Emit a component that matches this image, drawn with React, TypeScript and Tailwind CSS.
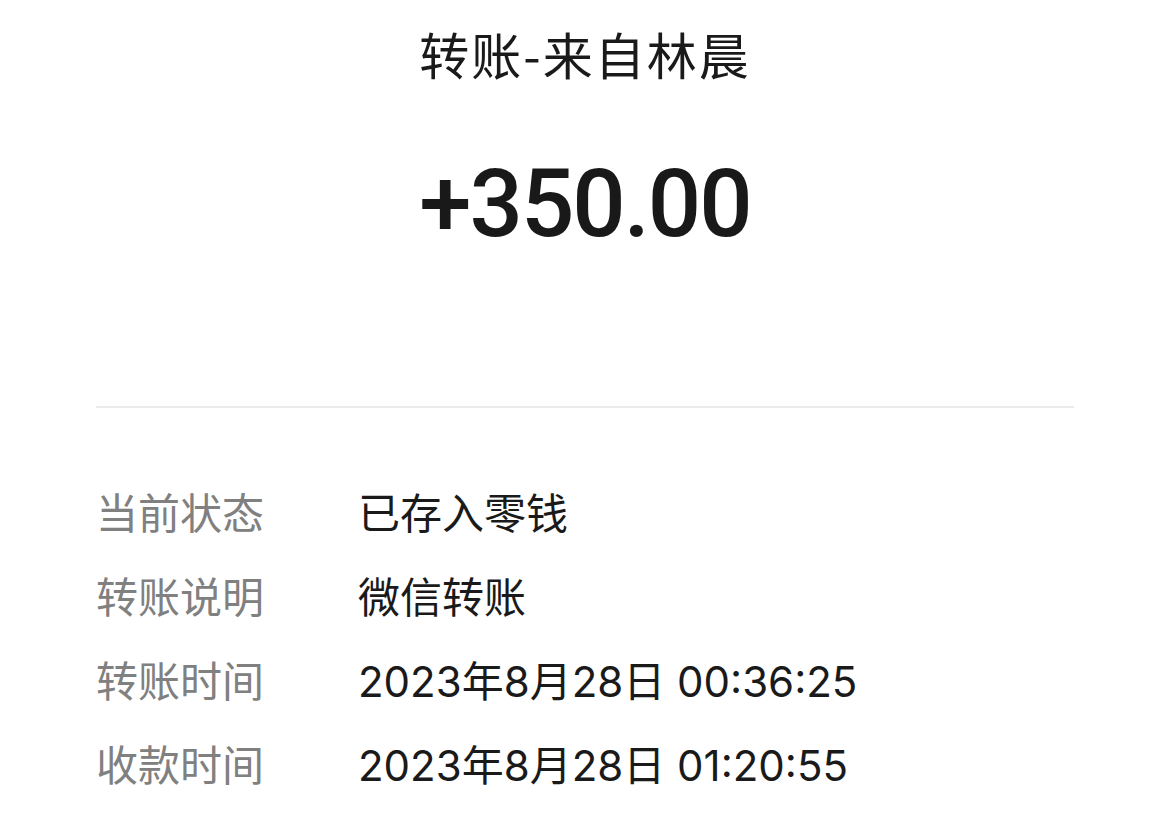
const rows: [string, string][] = [
  ['当前状态', '已存入零钱'],
  ['转账说明', '微信转账'],
  ['转账时间', '2023年8月28日 00:36:25'],
  ['收款时间', '2023年8月28日 01:20:55'],
];

export default function App() {
  return (
    <div
      className="w-[1170px] h-[819px] bg-white overflow-hidden flex flex-col"
      style={{ fontFamily: '"Inter", "Noto Sans CJK SC", sans-serif' }}
    >
      <div className="pt-[17px] h-[91px] flex justify-center">
        <h1 className="text-[50px] leading-[72px] text-[#1a1a1a] tracking-[2px] font-['Noto_Sans_CJK_SC',sans-serif]">
          转账-来自林晨
        </h1>
      </div>

      <div className="mt-[58px] flex justify-center">
        <span className="text-[94px] leading-[110px] font-medium text-[#191919] tracking-[-2px] font-['Roboto',sans-serif]">
          +350.00
        </span>
      </div>

      <div className="mx-[96px] mt-[147px] border-t-2 border-[#ebebeb]" />

      <div className="px-[96px] pt-[63px] flex flex-col">
        {rows.map(([label, value]) => (
          <div key={label} className="flex h-[84px] items-center text-[42px]">
            <span className="w-[262px] text-[#808080]">{label}</span>
            <span className="text-[#1a1a1a]">{value}</span>
          </div>
        ))}
      </div>
    </div>
  );
}
